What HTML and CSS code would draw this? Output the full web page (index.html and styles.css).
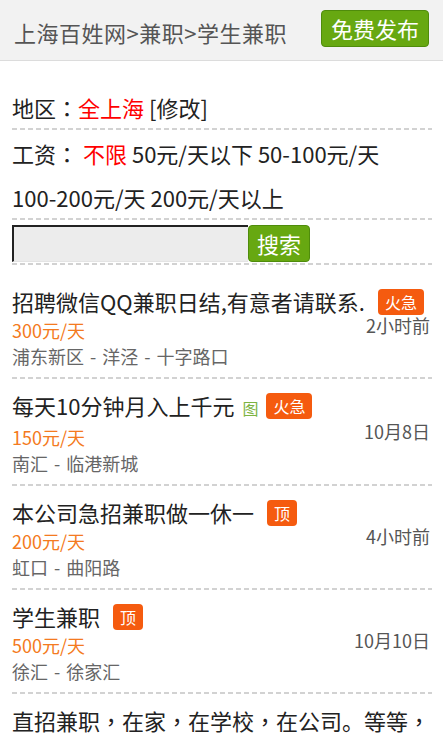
FILE: index.html
```html
<!DOCTYPE html>
<html lang="zh-CN">
<head>
<meta charset="utf-8">
<title>学生兼职</title>
<link rel="stylesheet" href="styles.css">
</head>
<body>
<header class="topbar">
  <div class="crumb">上海百姓网&gt;兼职&gt;学生兼职</div>
  <div class="publish">免费发布</div>
</header>
<main class="main">
  <div class="region dash">地区<span class="cp" lang="zh-TW">：</span><span class="red">全上海</span> [修改]</div>
  <div class="salary dash">工资<span class="cp" lang="zh-TW">：</span> <span class="opt red">不限</span> <span class="opt">50元/天以下</span> <span class="opt">50-100元/天</span> <span class="opt">100-200元/天</span> <span class="opt">200元/天以上</span></div>
  <div class="search dash">
    <input class="search-input" type="text">
    <div class="search-btn">搜索</div>
  </div>
  <div class="list">
    <div class="item dash">
      <div class="title">招聘微信QQ兼职日结,有意者请联系.<span class="badge">火急</span></div>
      <div class="price">300元/天</div>
      <div class="loc">浦东新区 - 洋泾 - 十字路口</div>
      <div class="time">2小时前</div>
    </div>
    <div class="item dash">
      <div class="title">每天10分钟月入上千元<span class="pic">图</span><span class="badge">火急</span></div>
      <div class="price">150元/天</div>
      <div class="loc">南汇 - 临港新城</div>
      <div class="time">10月8日</div>
    </div>
    <div class="item dash">
      <div class="title">本公司急招兼职做一休一<span class="badge">顶</span></div>
      <div class="price">200元/天</div>
      <div class="loc">虹口 - 曲阳路</div>
      <div class="time">4小时前</div>
    </div>
    <div class="item dash">
      <div class="title">学生兼职<span class="badge">顶</span></div>
      <div class="price">500元/天</div>
      <div class="loc">徐汇 - 徐家汇</div>
      <div class="time">10月10日</div>
    </div>
    <div class="item dash">
      <div class="title">直招兼职<span class="cp" lang="zh-TW">，</span>在家<span class="cp" lang="zh-TW">，</span>在学校<span class="cp" lang="zh-TW">，</span>在公司。等等<span class="cp" lang="zh-TW">，</span>都可以兼职<span class="badge">顶</span></div>
      <div class="price">100元/天</div>
      <div class="loc">闵行 - 莘庄</div>
      <div class="time">10月9日</div>
    </div>
  </div>
</main>
</body>
</html>
```

FILE: styles.css
```css
* {
  box-sizing: border-box;
}

body {
  margin: 0;
  background: #fff;
  color: #222;
  font-family: "Noto Sans CJK SC", "Noto Sans", sans-serif;
}

.topbar {
  height: 61px;
  background: #f2f2f2;
  border-bottom: 1px solid #dcdcdc;
  display: flex;
  align-items: center;
  justify-content: space-between;
  padding: 0 14px;
}

.crumb {
  font-size: 22px;
  color: #555;
  padding-top: 4px;
  letter-spacing: 0.5px;
  white-space: nowrap;
}

.publish {
  height: 37px;
  padding: 0 9px;
  background: #67a811;
  border: 1px solid #4f8c0b;
  border-radius: 4px;
  color: #fff;
  font-size: 22px;
  line-height: 35px;
  margin-bottom: 3px;
  white-space: nowrap;
}

.main {
  padding: 0 11px 0 12px;
}

.dash {
  background: repeating-linear-gradient(90deg, #d2d2d2 0 5px, transparent 5px 8px) left bottom / 100% 2px no-repeat;
}

.cp {
  font-family: "Noto Sans CJK TC", "Noto Sans CJK SC", sans-serif;
}

.region {
  padding: 26px 0 3px;
  font-size: 22px;
  line-height: 40px;
}

.red {
  color: #f00;
}

.salary {
  padding: 1px 0 1px;
  font-size: 22px;
  line-height: 44px;
}

.opt {
  white-space: nowrap;
}

.search {
  display: flex;
  padding: 5px 0 3px;
}

.search-input {
  width: 236px;
  height: 37px;
  margin: 0;
  padding: 0 6px;
  background: #ececec;
  border: 0;
  border-top: 2px solid #222;
  border-left: 2px solid #222;
  border-bottom: 1px solid #e4e4e4;
  outline: none;
  font-family: inherit;
  font-size: 18px;
}

.search-btn {
  height: 37px;
  width: 62px;
  background: #67a811;
  border: 1px solid #4f8c0b;
  border-radius: 4px;
  color: #fff;
  font-size: 22px;
  line-height: 35px;
  text-align: center;
}

.list {
  margin-top: 10px;
}

.item {
  display: grid;
  grid-template-columns: 1fr auto;
  padding: 10px 0 10px;
}

.title {
  grid-column: 1 / 3;
  grid-row: 1;
  font-size: 22px;
  line-height: 32px;
  color: #222;
}

.price {
  grid-column: 1;
  grid-row: 2;
  font-size: 18px;
  line-height: 26px;
  color: #f47a20;
}

.loc {
  grid-column: 1;
  grid-row: 3;
  font-size: 18px;
  line-height: 26px;
  word-spacing: 2px;
  color: #666;
}

.time {
  grid-column: 2;
  grid-row: 1 / 4;
  align-self: center;
  padding: 0 2px 4px 0;
  font-size: 18px;
  line-height: 26px;
  color: #555;
  white-space: nowrap;
}

.badge {
  display: inline-block;
  height: 26px;
  padding: 0 7px;
  margin-left: 13px;
  background: #f55b0f;
  border-radius: 4px;
  color: #fff;
  font-size: 16px;
  line-height: 26px;
  vertical-align: 2px;
}

.pic {
  margin-left: 8px;
  font-size: 16px;
  color: #7cb342;
}

.pic + .badge {
  margin-left: 8px;
}
```
